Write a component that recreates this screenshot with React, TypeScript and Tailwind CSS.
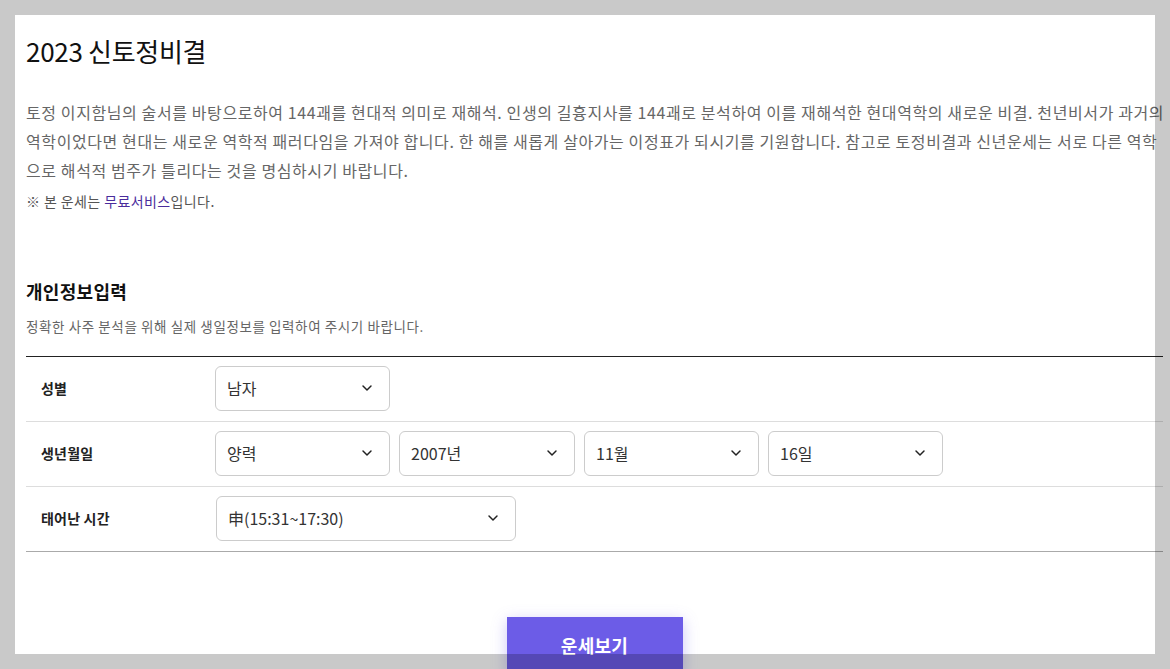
import React from "react";
import { ChevronDown } from "lucide-react";

function Select({ value, w }: { value: string; w: string }) {
  return (
    <div
      className={`${w} h-[45px] flex items-center justify-between pl-[11px] pr-[14px] border border-[#cccccc] rounded-[6px] bg-white text-[16px] text-[#333]`}
    >
      <span>{value}</span>
      <ChevronDown size={16} strokeWidth={2.2} className="text-[#222]" />
    </div>
  );
}

function Row({ label, children, last }: { label: string; children: React.ReactNode; last?: boolean }) {
  return (
    <div
      className={`h-[65px] flex items-center pb-[2px] border-b ${last ? "border-[#aaaaaa]" : "border-[#dddddd]"}`}
    >
      <div className="w-[189px] pl-[15px] text-[14px] font-bold text-[#222] tracking-[0.2px]">{label}</div>
      <div className="flex items-center gap-[9px]">{children}</div>
    </div>
  );
}

export default function App() {
  return (
    <div
      className="relative min-h-[700px] bg-white"
      style={{ fontFamily: '"Noto Sans CJK KR", "Noto Sans", sans-serif' }}
    >
      <div className="pl-[26px] w-[1163px]">
        <h1 className="pt-[33px] text-[26px] font-normal text-[#111] leading-[36px] tracking-[-0.3px]">
          2023 신토정비결
        </h1>
        <p className="mt-[29px] text-[16px] leading-[29px] text-[#666] tracking-[0.6px] whitespace-nowrap">
          토정 이지함님의 술서를 바탕으로하여 144괘를 현대적 의미로 재해석. 인생의 길흉지사를 144괘로 분석하여 이를 재해석한 현대역학의 새로운 비결. 천년비서가 과거의
          <br />
          역학이었다면 현대는 새로운 역학적 패러다임을 가져야 합니다. 한 해를 새롭게 살아가는 이정표가 되시기를 기원합니다. 참고로 토정비결과 신년운세는 서로 다른 역학
          <br />
          으로 해석적 범주가 틀리다는 것을 명심하시기 바랍니다.
        </p>
        <p className="mt-[4px] text-[14px] leading-[24px] text-[#555] tracking-[0.4px]">
          ※ 본 운세는 <span className="text-[#4a2c9c]">무료서비스</span>입니다.
        </p>

        <h2 className="mt-[65px] text-[18px] font-bold text-[#111] leading-[26px] tracking-[0.3px]">개인정보입력</h2>
        <p className="mt-[12px] text-[13.5px] leading-[20px] text-[#666] tracking-[0.6px]">
          정확한 사주 분석을 위해 실제 생일정보를 입력하여 주시기 바랍니다.
        </p>

        <div className="mt-[20px] border-t border-[#222]">
          <Row label="성별">
            <Select value="남자" w="w-[175px]" />
          </Row>
          <Row label="생년월일">
            <Select value="양력" w="w-[175px]" />
            <Select value="2007년" w="w-[176px]" />
            <Select value="11월" w="w-[175px]" />
            <Select value="16일" w="w-[175px]" />
          </Row>
          <Row label="태어난 시간" last>
            <div className="pl-[1px]">
              <Select value="申(15:31~17:30)" w="w-[300px]" />
            </div>
          </Row>
        </div>

        <div className="mt-[65px] flex justify-center">
          <button className="w-[176px] h-[56px] bg-[#6c5ce7] text-white text-[18px] font-bold shadow-[0_4px_14px_rgba(108,92,231,0.35)] tracking-[0.3px]">
            운세보기
          </button>
        </div>
      </div>

      {/* frame overlay */}
      <div className="pointer-events-none fixed inset-x-0 top-0 h-[15px] bg-[rgba(0,0,0,0.21)]" />
      <div className="pointer-events-none fixed inset-x-0 bottom-0 h-[15px] bg-[rgba(0,0,0,0.21)]" />
      <div className="pointer-events-none fixed left-0 top-[15px] bottom-[15px] w-[15px] bg-[rgba(0,0,0,0.21)]" />
      <div className="pointer-events-none fixed right-0 top-[15px] bottom-[15px] w-[15px] bg-[rgba(0,0,0,0.21)]" />
    </div>
  );
}
